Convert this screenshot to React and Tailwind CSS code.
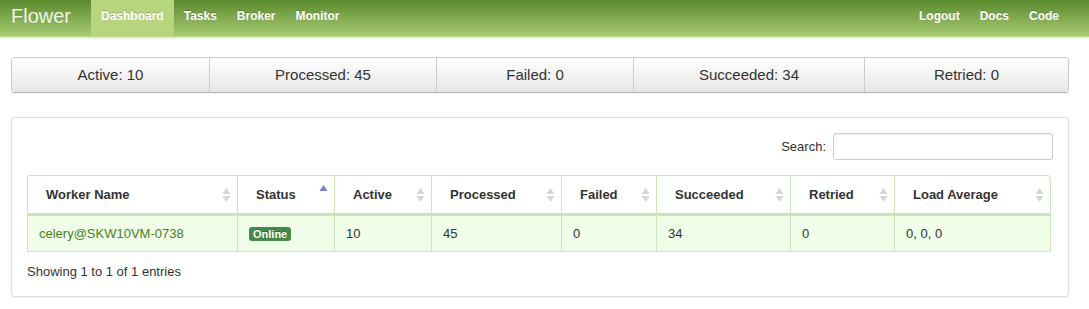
import React from "react";

function SortIcon({ mode }) {
  if (mode === "asc") {
    return (
      <svg width="9" height="14" viewBox="0 0 9 14" className="shrink-0">
        <path d="M4.5 1 L8.5 7 L0.5 7 Z" fill="#7b7fd6" />
      </svg>
    );
  }
  return (
    <svg width="9" height="16" viewBox="0 0 9 16" className="shrink-0">
      <path d="M4.5 1 L8.5 7 L0.5 7 Z" fill="#d6d6d6" />
      <path d="M4.5 15 L8.5 9 L0.5 9 Z" fill="#d6d6d6" />
    </svg>
  );
}

const cols = [
  { name: "Worker Name", w: "w-[209px]" },
  { name: "Status", w: "w-[97px]", sort: "asc" },
  { name: "Active", w: "w-[97px]" },
  { name: "Processed", w: "w-[130px]" },
  { name: "Failed", w: "w-[95px]" },
  { name: "Succeeded", w: "w-[134px]" },
  { name: "Retried", w: "w-[104px]" },
  { name: "Load Average", w: "flex-1" },
];

export default function App() {
  const stats = [
    { t: "Active: 10", w: "w-[197px]" },
    { t: "Processed: 45", w: "w-[227px]" },
    { t: "Failed: 0", w: "w-[197px]" },
    { t: "Succeeded: 34", w: "w-[231px]" },
    { t: "Retried: 0", w: "flex-1" },
  ];
  return (
    <div
      className="w-[1089px] h-[309px] bg-white text-[#333] overflow-hidden"
      style={{ fontFamily: '"Liberation Sans", Arial, sans-serif' }}
    >
      {/* Navbar */}
      <div className="h-[37px] bg-gradient-to-b from-[#5a8a2e] to-[#a9cc72] border-b border-[#b9d88a] shadow-[0_1px_3px_rgba(0,0,0,0.15)] flex items-stretch pl-[11px] pr-[20px]">
        <div className="flex items-center pb-[4px] pr-[20px] text-[20px] text-[#eef7e2] [text-shadow:0_1px_0_rgba(0,0,0,0.1)]">
          Flower
        </div>
        <nav className="flex items-stretch text-[12px] font-bold text-white [text-shadow:0_-1px_0_rgba(0,0,0,0.2)]">
          <a className="flex items-center pb-[4px] px-[10px] bg-[#b7d57d]">Dashboard</a>
          <a className="flex items-center pb-[4px] px-[10px]">Tasks</a>
          <a className="flex items-center pb-[4px] px-[10px]">Broker</a>
          <a className="flex items-center pb-[4px] px-[10px]">Monitor</a>
        </nav>
        <nav className="ml-auto flex items-stretch text-[12px] font-bold text-white [text-shadow:0_-1px_0_rgba(0,0,0,0.2)]">
          <a className="flex items-center pb-[4px] px-[10px]">Logout</a>
          <a className="flex items-center pb-[4px] px-[10px]">Docs</a>
          <a className="flex items-center pb-[4px] px-[10px]">Code</a>
        </nav>
      </div>

      <div className="pl-[11px] pr-[20px] pt-[20px]">
        {/* Stats bar */}
        <div className="flex h-[36px] rounded-[4px] border border-[#ccc] border-b-[#b3b3b3] shadow-[0_1px_2px_rgba(0,0,0,0.05)] overflow-hidden">
          {stats.map((s, i) => (
            <div
              key={i}
              className={`${s.w} flex items-center justify-center text-[15px] text-[#333] bg-gradient-to-b from-[#ffffff] to-[#e6e6e6] ${i > 0 ? "border-l border-[#ccc]" : ""}`}
            >
              {s.t}
            </div>
          ))}
        </div>

        {/* Panel */}
        <div className="mt-[24px] h-[180px] rounded-[4px] border border-[#ddd] shadow-[0_1px_2px_rgba(0,0,0,0.08)] pt-[15px] pl-[15px] pr-[17px]">
          <div className="flex items-center justify-end gap-[7px] mr-[-2px]">
            <span className="text-[13px]">Search:</span>
            <div className="w-[220px] h-[27px] rounded-[3px] border border-[#ccc] shadow-[inset_0_1px_1px_rgba(0,0,0,0.075)]" />
          </div>

          <div className="mt-[15px]">
            {/* header */}
            <div className="flex h-[41px] border border-[#c9e8bb] border-b-[3px] border-b-[#c6e8b4] rounded-tr-[4px] rounded-tl-[2px]">
              {cols.map((c, i) => (
                <div
                  key={i}
                  className={`${c.w} flex items-center justify-between pl-[18px] pr-[6px] text-[13px] font-bold text-[#333] ${i > 0 ? "border-l border-[#c9e8bb]" : ""}`}
                >
                  <span>{c.name}</span>
                  {c.sort === "asc" ? (
                    <span className="self-start mt-[8px]">
                      <SortIcon mode="asc" />
                    </span>
                  ) : (
                    <SortIcon />
                  )}
                </div>
              ))}
            </div>
            {/* row */}
            <div className="flex h-[36px] bg-[#effde9] border border-t-0 border-[#c9e8bb] text-[13px]">
              {[
                <span className="text-[#4a8121]">celery@SKW10VM-0738</span>,
                <span className="inline-block bg-[#468847] text-white text-[11px] font-bold leading-[14px] px-[4px] rounded-[3px] [text-shadow:0_-1px_0_rgba(0,0,0,0.25)]">
                  Online
                </span>,
                "10",
                "45",
                "0",
                "34",
                "0",
                "0, 0, 0",
              ].map((v, i) => (
                <div
                  key={i}
                  className={`${cols[i].w} flex items-center pl-[11px] ${i > 0 ? "border-l border-[#c9e8bb]" : ""}`}
                >
                  {v}
                </div>
              ))}
            </div>
          </div>

          <div className="mt-[10px] text-[13px]">Showing 1 to 1 of 1 entries</div>
        </div>
      </div>
    </div>
  );
}
